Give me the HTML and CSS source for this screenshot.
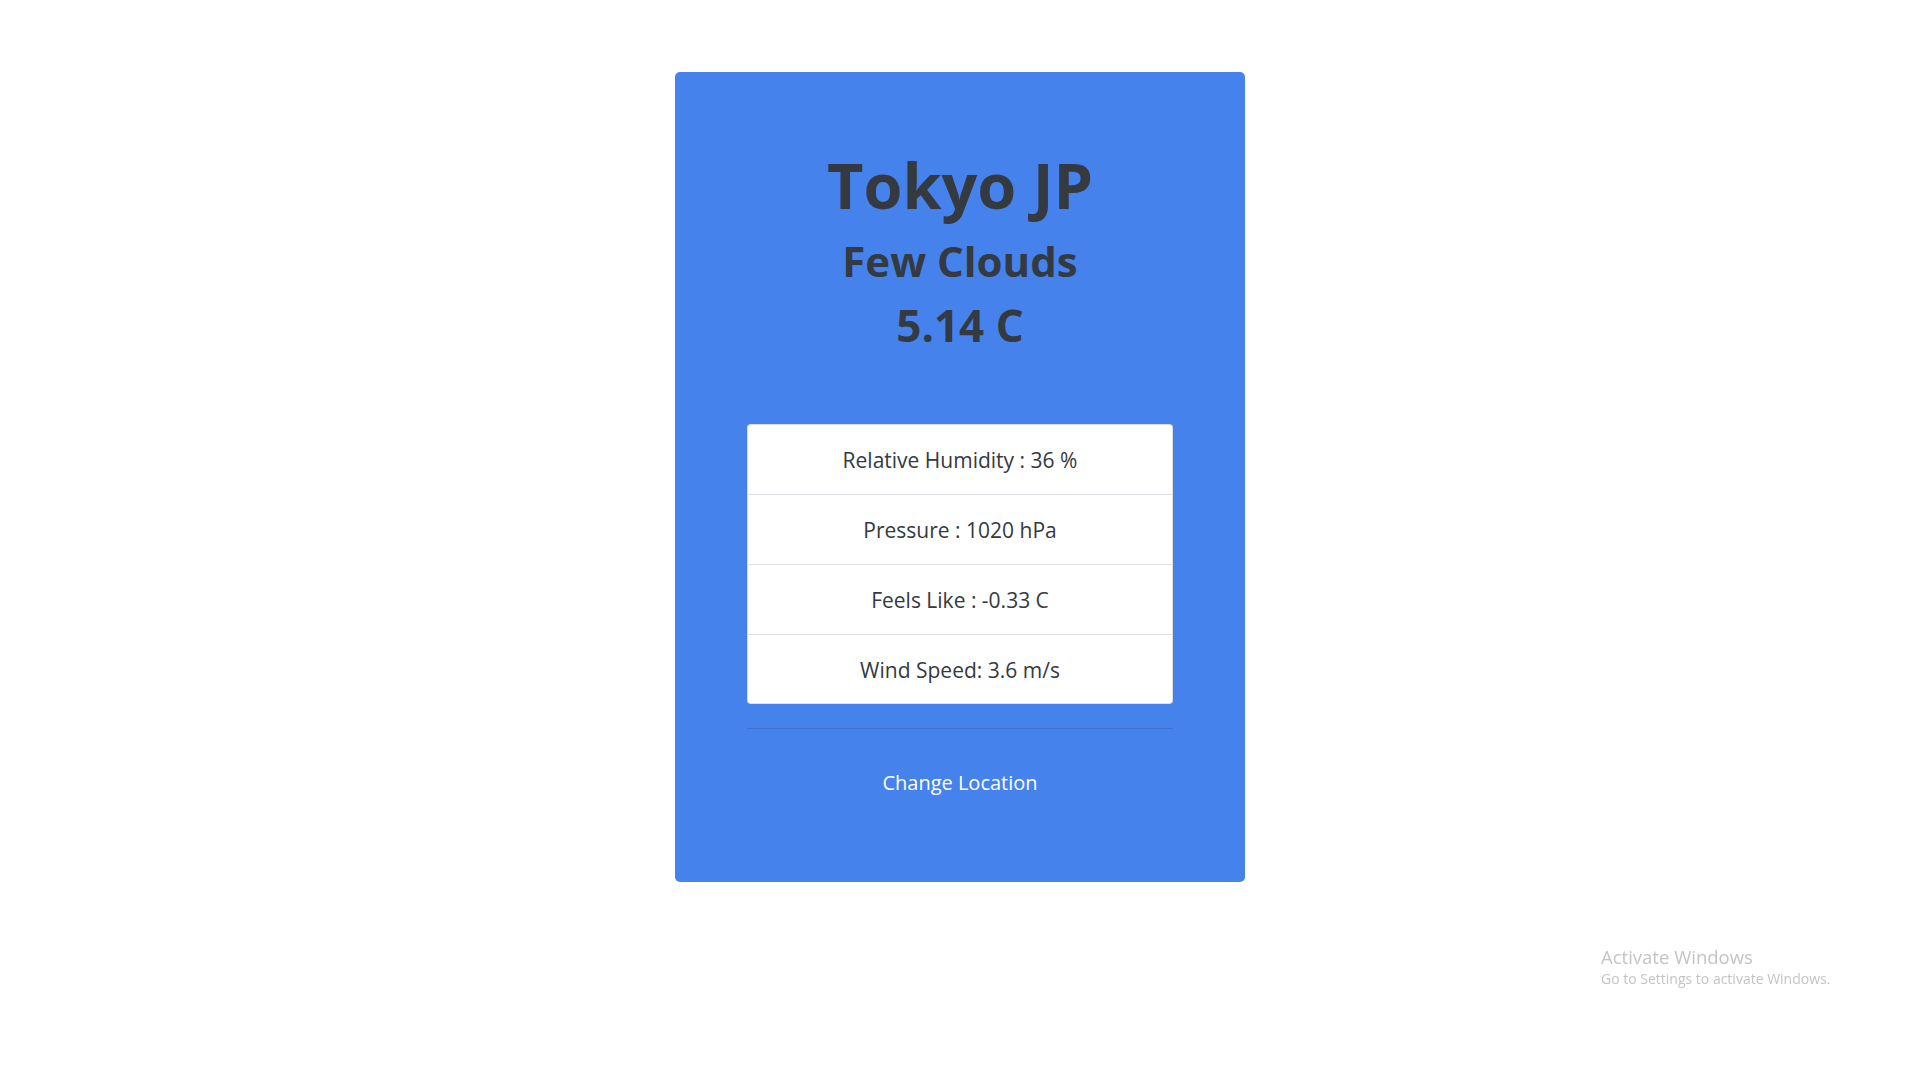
FILE: index.html
```html
<!DOCTYPE html>
<html lang="en">
<head>
<meta charset="utf-8">
<title>Weather</title>
<link rel="stylesheet" href="styles.css">
</head>
<body>
<main class="card">
  <h1 class="city">Tokyo JP</h1>
  <h2 class="desc">Few Clouds</h2>
  <h3 class="temp">5.14 C</h3>
  <ul class="details">
    <li class="detail">Relative Humidity : 36 %</li>
    <li class="detail">Pressure : 1020 hPa</li>
    <li class="detail">Feels Like : -0.33 C</li>
    <li class="detail">Wind Speed: 3.6 m/s</li>
  </ul>
  <hr class="divider">
  <a class="change" href="#">Change Location</a>
</main>
<div class="watermark">
  <div class="wm-title">Activate Windows</div>
  <div class="wm-sub">Go to Settings to activate Windows.</div>
</div>
</body>
</html>
```
FILE: styles.css
```css
html, body {
  margin: 0;
  padding: 0;
  background: #ffffff;
}

body {
  font-family: "Open Sans", "Noto Sans", sans-serif;
  color: #343a40;
}

.card {
  box-sizing: border-box;
  width: 570px;
  height: 810px;
  margin: 72px auto 0;
  padding: 74px 72px 0;
  background: #4582ec;
  border-radius: 5px;
  display: flex;
  flex-direction: column;
}

.city,
.desc,
.temp {
  margin: 0;
  text-align: center;
  font-weight: 700;
  line-height: 1.2;
  color: #343a40;
}

.city {
  font-size: 63px;
  line-height: 77px;
}

.desc {
  font-size: 42px;
  margin-top: 13px;
}

.temp {
  font-size: 44px;
  margin-top: 12.6px;
}

.details {
  list-style: none;
  margin: 72px 0 0;
  padding: 0;
  background: #ffffff;
  border: 1px solid rgba(0, 0, 0, 0.125);
  border-radius: 4px;
}

.detail {
  box-sizing: border-box;
  height: 69px;
  padding-top: 2px;
  display: flex;
  align-items: center;
  justify-content: center;
  font-size: 21px;
  color: #343a40;
}

.detail + .detail {
  border-top: 1px solid #dee2e6;
  height: 70px;
}

.detail:last-child {
  height: 69px;
}

.divider {
  margin: 24px 0 0;
  border: 0;
  border-top: 1px solid rgba(0, 0, 0, 0.1);
  height: 0;
}

.change {
  margin-top: 39px;
  align-self: center;
  font-size: 20px;
  line-height: 30px;
  color: #ffffff;
  text-decoration: none;
}

.watermark {
  position: fixed;
  left: 1601px;
  top: 946px;
  color: #c4c4c4;
  font-family: "Open Sans", "Noto Sans", sans-serif;
}

.wm-title {
  font-size: 18.5px;
  line-height: 22px;
}

.wm-sub {
  font-size: 14px;
  line-height: 18px;
  margin-top: 2px;
}
```
